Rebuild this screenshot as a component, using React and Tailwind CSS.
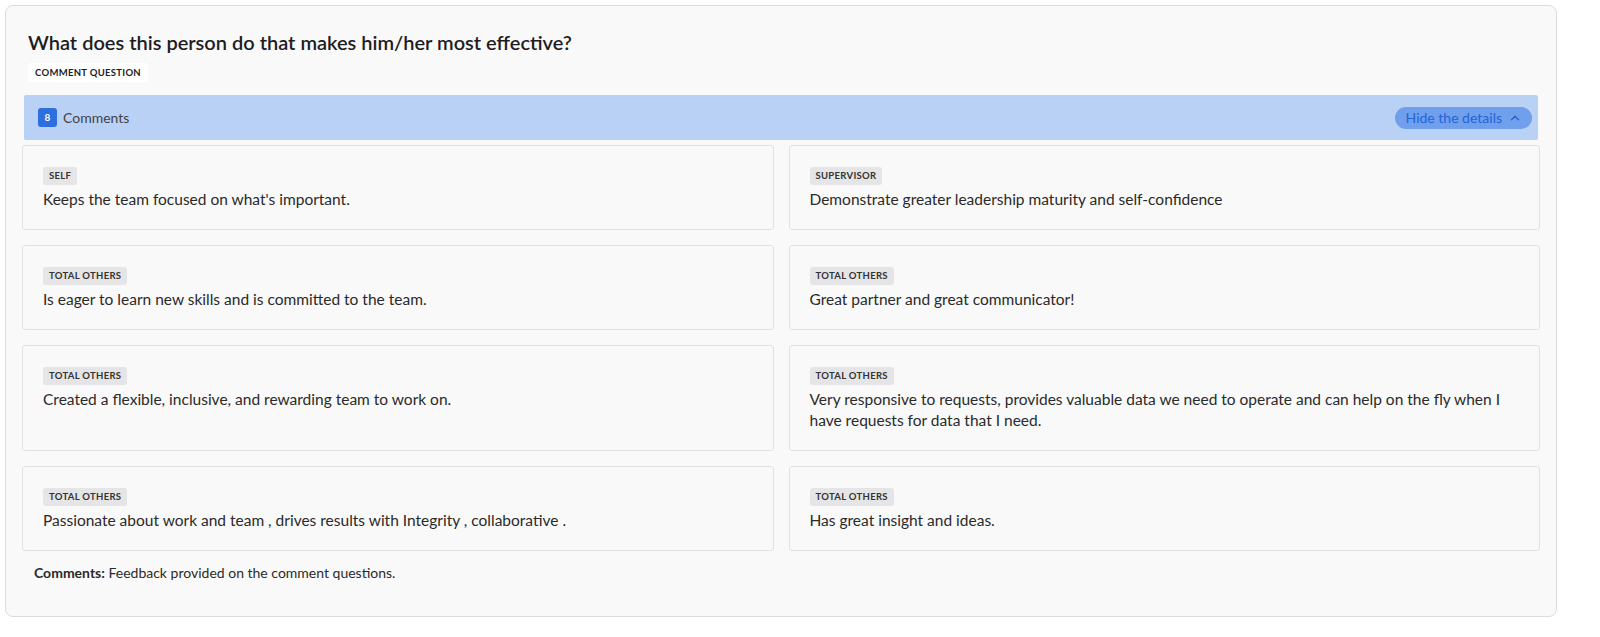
import { ChevronUp } from "lucide-react";

const comments = [
  { source: "SELF", text: "Keeps the team focused on what's important." },
  { source: "SUPERVISOR", text: "Demonstrate greater leadership maturity and self-confidence" },
  { source: "TOTAL OTHERS", text: "Is eager to learn new skills and is committed to the team." },
  { source: "TOTAL OTHERS", text: "Great partner and great communicator!" },
  { source: "TOTAL OTHERS", text: "Created a flexible, inclusive, and rewarding team to work on." },
  {
    source: "TOTAL OTHERS",
    text: "Very responsive to requests, provides valuable data we need to operate and can help on the fly when I have requests for data that I need.",
  },
  {
    source: "TOTAL OTHERS",
    text: "Passionate about work and team , drives results with Integrity , collaborative .",
  },
  { source: "TOTAL OTHERS", text: "Has great insight and ideas." },
];

const CommentCard = ({ source, text }) => (
  <div className="flex flex-col items-start bg-[#f9f9f9] border border-[#e2e2e2] rounded-[3px] pl-[20px] pr-6 pt-[21px] pb-[19px]">
    <span className="block bg-[#e5e5e7] text-[#333] text-[9.5px] font-bold tracking-[0.3px] leading-[18px] px-[6px] rounded-[3px]">
      {source}
    </span>
    <p className="mt-[4px] text-[15.5px] leading-[21px] text-[#2a2a2a]">{text}</p>
  </div>
);

export default function App() {
  return (
    <div className="bg-white min-h-screen pt-[5px] pl-[5px]" style={{ fontFamily: "Lato, 'Open Sans', sans-serif" }}>
      <div className="w-[1552px] h-[612px] bg-[#f9f9f9] border border-[#dcdcdc] rounded-[8px] px-4 pt-[22px]">
        <h1 className="ml-[6px] text-[20px] leading-[28px] font-semibold text-[#1d1d1f]">
          What does this person do that makes him/her most effective?
        </h1>
        <div className="ml-[6px] mt-[7px] w-fit bg-white text-[#1d1d1f] text-[9.5px] font-bold leading-[19px] px-[7px] rounded-[3px] tracking-[0.3px]">
          COMMENT QUESTION
        </div>

        <div className="mt-[13px] mx-[2px] h-[45px] bg-[#b9d1f5] rounded-[2px] flex items-center justify-between pl-[14px] pr-[6px]">
          <div className="flex items-center gap-[6px]">
            <span className="w-[19px] h-[19px] rounded-[3px] bg-[#2d6ee0] text-white text-[10px] font-bold flex items-center justify-center">
              8
            </span>
            <span className="text-[14px] text-[#444]">Comments</span>
          </div>
          <button
            type="button"
            className="flex items-center gap-[6px] bg-[#70a0ec] text-[#2463d8] text-[14px] h-[22px] pl-[11px] pr-[10px] rounded-full"
          >
            Hide the details
            <ChevronUp size={14} strokeWidth={2.2} />
          </button>
        </div>

        <div className="mt-[5px] grid grid-cols-2 gap-[15px]">
          {comments.map((c, i) => (
            <CommentCard key={i} source={c.source} text={c.text} />
          ))}
        </div>

        <p className="mt-[13px] ml-[12px] text-[14px] leading-[18px] text-[#2a2a2a]">
          <span className="font-bold">Comments:</span> Feedback provided on the comment questions.
        </p>
      </div>
    </div>
  );
}
